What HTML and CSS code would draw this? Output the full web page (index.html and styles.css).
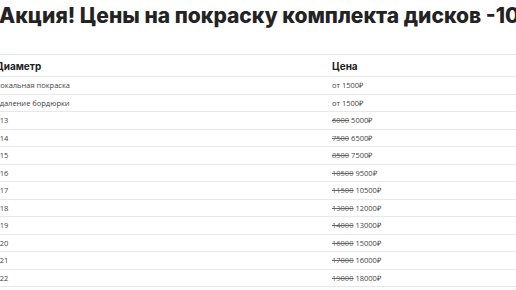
FILE: index.html
```html
<!DOCTYPE html>
<html lang="ru">
<head>
<meta charset="utf-8">
<link rel="stylesheet" href="styles.css">
</head>
<body>
<div class="page">
  <h1 class="title">Акция! Цены на покраску комплекта дисков -1000₽</h1>
  <table class="prices">
    <thead>
      <tr><th class="c1">Диаметр</th><th>Цена</th></tr>
    </thead>
    <tbody>
      <tr><td>Локальная покраска</td><td>от 1500₽</td></tr>
      <tr><td>Удаление бордюрки</td><td>от 1500₽</td></tr>
      <tr><td>R13</td><td><s>6000</s> 5000₽</td></tr>
      <tr><td>R14</td><td><s>7500</s> 6500₽</td></tr>
      <tr><td>R15</td><td><s>8500</s> 7500₽</td></tr>
      <tr><td>R16</td><td><s>10500</s> 9500₽</td></tr>
      <tr><td>R17</td><td><s>11500</s> 10500₽</td></tr>
      <tr><td>R18</td><td><s>13000</s> 12000₽</td></tr>
      <tr><td>R19</td><td><s>14000</s> 13000₽</td></tr>
      <tr><td>R20</td><td><s>16000</s> 15000₽</td></tr>
      <tr><td>R21</td><td><s>17000</s> 16000₽</td></tr>
      <tr><td>R22</td><td><s>19000</s> 18000₽</td></tr>
    </tbody>
  </table>
</div>
</body>
</html>
```
FILE: styles.css
```css
html, body {
  margin: 0;
  padding: 0;
  background: #fff;
  overflow: hidden;
}
.page {
  margin-left: -5px;
  width: 760px;
  color: #222;
}
.title {
  margin: 1px 0 0 4px;
  font-family: Inter, "Liberation Sans", sans-serif;
  font-weight: 800;
  font-size: 21px;
  line-height: 30px;
  white-space: nowrap;
  color: #232323;
  letter-spacing: 0;
}
.prices {
  margin-top: 23px;
  width: 760px;
  border-collapse: collapse;
  font-family: "Open Sans", "Liberation Sans", sans-serif;
}
.prices th {
  text-align: left;
  font-family: Inter, "Liberation Sans", sans-serif;
  font-weight: 700;
  font-size: 10px;
  height: 21px;
  padding: 0;
  color: #222;
  border-top: 1px solid #e8e8e8;
  border-bottom: 1px solid #e8e8e8;
}
.prices th.c1 {
  width: 337px;
}
.prices td {
  font-size: 7.5px;
  height: 16.5px;
  padding: 0;
  color: #444;
  border-bottom: 1px solid #e8e8e8;
}
.prices s {
  color: #666;
}
```
